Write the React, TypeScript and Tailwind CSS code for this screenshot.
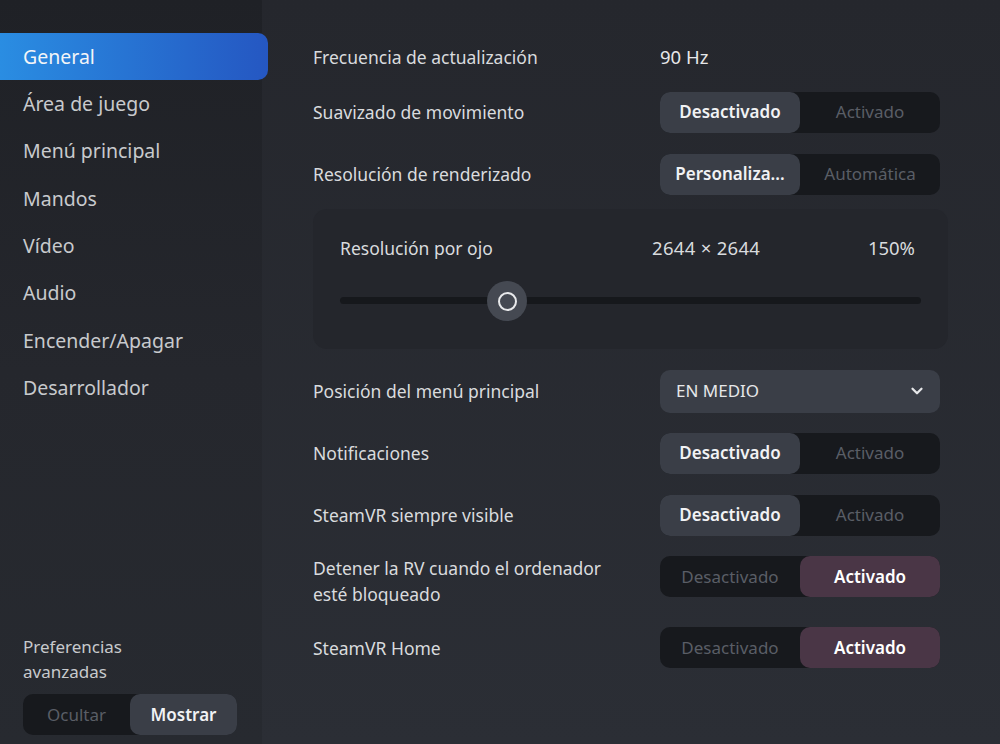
import { ChevronDown } from "lucide-react"

const font = { fontFamily: '"Noto Sans", "Open Sans", sans-serif' }

const navItems = [
  "General",
  "Área de juego",
  "Menú principal",
  "Mandos",
  "Vídeo",
  "Audio",
  "Encender/Apagar",
  "Desarrollador",
]

// two-segment switch used everywhere in the panel
const Segmented = ({
  left,
  right,
  active,
  accent = false,
  className = "w-[280px]",
}: {
  left: string
  right: string
  active: 0 | 1
  accent?: boolean
  className?: string
}) => {
  const on = accent ? "bg-[#4a3646] text-white font-semibold" : "bg-[#3a3e47] text-[#f1f2f4] font-semibold"
  const off = "text-[#5a5e66]"
  return (
    <div className={`flex h-[41px] rounded-[10px] bg-[#17191d] text-[17px] ${className}`}>
      <div className={`flex flex-1 items-center justify-center rounded-[10px] ${active === 0 ? on : off}`}>{left}</div>
      <div className={`flex flex-1 items-center justify-center rounded-[10px] ${active === 1 ? on : off}`}>{right}</div>
    </div>
  )
}

const Row = ({
  label,
  children,
  className = "h-[62px]",
}: {
  label: React.ReactNode
  children: React.ReactNode
  className?: string
}) => (
  <div className={`flex items-center ${className}`}>
    <div className="w-[347px] text-[17.5px] leading-[26px] text-[#d9dbde]">{label}</div>
    {children}
  </div>
)

export default function App() {
  return (
    <div style={font} className="flex h-[744px] w-[1000px] overflow-hidden bg-[#2a2d34]">
      {/* Sidebar */}
      <aside className="relative z-10 flex w-[262px] flex-col bg-gradient-to-b from-[#1f2126] via-[#25272d] to-[#272a30] pt-[33px]">
        <nav className="flex flex-col">
          {navItems.map((item, i) => (
            <div
              key={item}
              className={
                i === 0
                  ? "mr-[-6px] flex h-[47px] items-center rounded-r-[10px] bg-gradient-to-r from-[#2a8de2] to-[#2557c2] pl-[23px] text-[19.5px] text-[#f3f5f8]"
                  : "flex h-[47.3px] items-center pl-[23px] text-[19.5px] text-[#c8cacd]"
              }
            >
              {item}
            </div>
          ))}
        </nav>
        <div className="mt-auto pb-[9px] pl-[23px]">
          <div className="text-[17px] leading-[25px] text-[#c8cacd]">
            Preferencias
            <br />
            avanzadas
          </div>
          <Segmented left="Ocultar" right="Mostrar" active={1} className="mt-[10px] w-[214px]" />
        </div>
      </aside>

      {/* Main */}
      <main className="flex-1 bg-gradient-to-b from-[#25272d] to-[#2b2e35] pl-[51px] pt-[33px]">
        <Row label="Frecuencia de actualización" className="h-[48px]">
          <span className="text-[18.5px] text-[#e6e7e9]">90 Hz</span>
        </Row>
        <Row label="Suavizado de movimiento">
          <Segmented left="Desactivado" right="Activado" active={0} />
        </Row>
        <Row label="Resolución de renderizado">
          <Segmented left="Personaliza..." right="Automática" active={0} />
        </Row>

        <div className="mt-[4px] h-[140px] w-[635px] rounded-[14px] bg-[#24262c] px-[27px] pt-[27px]">
          <div className="flex h-[24px] items-center text-[17.5px] text-[#d9dbde]">
            <span className="w-[312px]">Resolución por ojo</span>
            <span className="flex-1 text-[18.5px] tracking-[0.3px]">2644 × 2644</span>
            <span className="pr-[6px] text-[18.5px]">150%</span>
          </div>
          <div className="relative mt-[21px] h-[40px]">
            <div className="absolute left-0 right-0 top-[16px] h-[7px] rounded-full bg-[#16181c]" />
            <div className="absolute left-[147px] top-0 flex h-[40px] w-[40px] items-center justify-center rounded-full bg-[#454952]">
              <div className="h-[19px] w-[19px] rounded-full border-2 border-[#e8e9eb]" />
            </div>
          </div>
        </div>

        <Row label="Posición del menú principal" className="mt-[11px] h-[62px]">
          <div className="flex h-[43px] w-[280px] items-center justify-between rounded-[10px] bg-[#3a3e47] pl-[16px] pr-[14px] text-[17px] text-[#e6e7e9]">
            EN MEDIO
            <ChevronDown size={18} strokeWidth={3} />
          </div>
        </Row>
        <Row label="Notificaciones">
          <Segmented left="Desactivado" right="Activado" active={0} />
        </Row>
        <Row label="SteamVR siempre visible">
          <Segmented left="Desactivado" right="Activado" active={0} />
        </Row>
        <Row
          className="h-[61px]"
          label={
            <div className="pt-[9px]">
              Detener la RV cuando el ordenador
              <br />
              esté bloqueado
            </div>
          }
        >
          <Segmented left="Desactivado" right="Activado" active={1} accent />
        </Row>
        <Row label="SteamVR Home" className="mt-[10px] h-[61px]">
          <Segmented left="Desactivado" right="Activado" active={1} accent />
        </Row>
      </main>
    </div>
  )
}
